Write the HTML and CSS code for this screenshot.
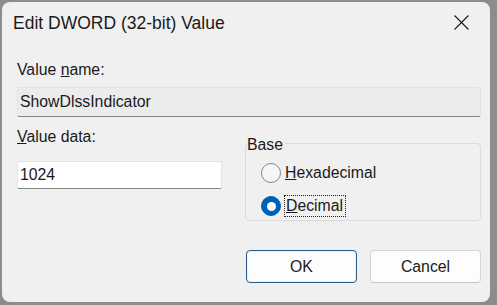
FILE: index.html
```html
<!doctype html>
<html>
<head>
  <link rel="stylesheet" href="styles.css">
</head>
<body>
  <div class="dialog">
    <div class="titlebar">
      <div class="title">Edit DWORD (32-bit) Value</div>
      <div class="close">
        <svg width="15" height="15" viewBox="0 0 15 15"><path d="M0.5 0.5 L14.5 14.5 M14.5 0.5 L0.5 14.5" stroke="#1a1a1a" stroke-width="1.1" fill="none"/></svg>
      </div>
    </div>

    <div class="content">
      <div class="label first">Value <u>n</u>ame:</div>
      <div class="field readonly">ShowDlssIndicator</div>

      <div class="row">
        <div class="data-col">
          <div class="label"><u>V</u>alue data:</div>
          <div class="field edit">1024</div>
        </div>
        <div class="group">
          <span class="group-label">Base</span>
          <div class="radio-row">
            <span class="radio"></span>
            <span class="radio-text"><u>H</u>exadecimal</span>
          </div>
          <div class="radio-row">
            <span class="radio checked"></span>
            <span class="radio-text focus"><u>D</u>ecimal</span>
          </div>
        </div>
      </div>

      <div class="buttons">
        <button class="btn default">OK</button>
        <button class="btn">Cancel</button>
      </div>
    </div>
  </div>
</body>
</html>
```

FILE: styles.css
```css
* {
  margin: 0;
  padding: 0;
  box-sizing: border-box;
}

body {
  background: #8c8c8c;
  font-family: "Segoe UI", "Liberation Sans", Arial, sans-serif;
  font-size: 15.8px;
  color: #1a1a1a;
  padding: 2px 0 0 2px;
  overflow: hidden;
}

.dialog {
  width: 488px;
  height: 300px;
  background: #f0f0f0;
  border-radius: 8px;
}

.titlebar {
  height: 46px;
  display: flex;
  justify-content: space-between;
  padding: 11px 0 0 11px;
}

.title {
  font-size: 17.5px;
  line-height: 20px;
}

.close {
  width: 15px;
  height: 15px;
  margin: 2px 21px 0 0;
}

.close svg {
  display: block;
}

.content {
  padding: 0 9px 0 15px;
}

.label {
  line-height: 18px;
  height: 18px;
}

.label.first {
  margin-top: 13px;
}

.field {
  border: 1px solid #e3e3e3;
  border-bottom-color: #858585;
  padding-left: 2px;
  border-radius: 2px;
}

.field.readonly {
  margin-top: 8px;
  height: 30px;
  line-height: 28px;
  background: #ececec;
}

.field.edit {
  margin-top: 15px;
  height: 28px;
  line-height: 26px;
  background: #fff;
}

.row {
  display: flex;
  gap: 23px;
  margin-top: 11px;
}

.data-col {
  width: 205px;
}

.group {
  position: relative;
  width: 236px;
  height: 78px;
  margin-top: 15px;
  border: 1px solid #dcdcdc;
  border-radius: 4px;
  padding: 18px 0 0 15px;
}

.group-label {
  position: absolute;
  top: -8px;
  left: 1px;
  line-height: 18px;
  background: #f0f0f0;
  padding-right: 2px;
}

.radio-row {
  display: flex;
  align-items: center;
  height: 22px;
  margin-bottom: 11px;
}

.radio {
  width: 20px;
  height: 20px;
  border-radius: 50%;
  border: 1px solid #868686;
  background: #f6f6f6;
  display: flex;
  align-items: center;
  justify-content: center;
}

.radio.checked {
  border-color: #005fb8;
  background: #005fb8;
}

.radio.checked::after {
  content: "";
  width: 9px;
  height: 9px;
  border-radius: 50%;
  background: #fff;
}

.radio-text {
  margin-left: 4px;
  line-height: 22px;
}

.radio-text.focus {
  margin-left: 3px;
  padding: 0 2px 0 1px;
  line-height: 20px;
  height: 22px;
  border: 1px dotted #222;
}

.buttons {
  display: flex;
  justify-content: flex-end;
  gap: 13px;
  margin-top: 29px;
}

.btn {
  width: 111px;
  height: 33px;
  font-family: inherit;
  font-size: 15.8px;
  color: #1a1a1a;
  background: #fdfdfd;
  border: 1px solid #d6d6d6;
  border-bottom-color: #c4c4c4;
  border-radius: 4px;
  line-height: 31px;
}

.btn.default {
  border-color: #2b5a87;
  box-shadow: inset 0 0 0 1px #eaf2fa;
}
```
